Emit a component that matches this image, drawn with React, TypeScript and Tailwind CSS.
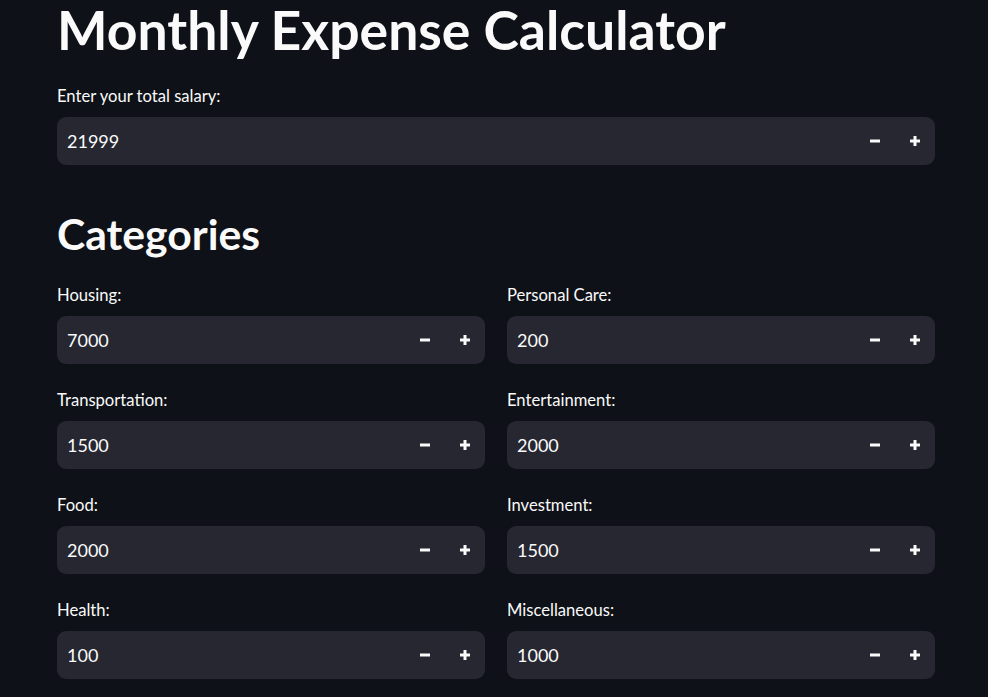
import React from 'react';

const font = { fontFamily: 'Lato, "Noto Sans", sans-serif' };

const MinusIcon = () => (
  <svg width="10" height="10" viewBox="0 0 10 10" fill="#fafafa">
    <rect x="0" y="3.5" width="10" height="3" />
  </svg>
);

const PlusIcon = () => (
  <svg width="10" height="10" viewBox="0 0 10 10" fill="#fafafa">
    <rect x="0" y="3.5" width="10" height="3" />
    <rect x="3.5" y="0" width="3" height="10" />
  </svg>
);

interface FieldProps {
  label: string;
  value: string;
}

const NumberField: React.FC<FieldProps> = ({ label, value }) => (
  <div className="flex flex-col">
    <label className="text-[16.6px] leading-[21px] text-[#fafafa] mb-[10px]">{label}</label>
    <div className="flex items-center h-[48px] rounded-[9px] bg-[#262730] pl-[10px]">
      <span className="flex-1 text-[18px] text-[#fafafa]">{value}</span>
      <button className="w-[40px] h-full flex items-center justify-center">
        <MinusIcon />
      </button>
      <button className="w-[40px] h-full flex items-center justify-center">
        <PlusIcon />
      </button>
    </div>
  </div>
);

const categories = [
  { label: 'Housing:', value: '7000' },
  { label: 'Personal Care:', value: '200' },
  { label: 'Transportation:', value: '1500' },
  { label: 'Entertainment:', value: '2000' },
  { label: 'Food:', value: '2000' },
  { label: 'Investment:', value: '1500' },
  { label: 'Health:', value: '100' },
  { label: 'Miscellaneous:', value: '1000' },
];

export default function App() {
  return (
    <div className="min-h-screen bg-[#0e1117] overflow-hidden" style={font}>
      <div className="w-[878px] ml-[57px] flex flex-col">
        <h1 className="text-[53.5px] leading-[58px] font-bold text-[#fafafa] mb-[28px]">
          Monthly Expense Calculator
        </h1>
        <NumberField label="Enter your total salary:" value="21999" />
        <h2 className="text-[42.7px] leading-[56px] font-bold text-[#fafafa] mt-[41px] mb-[23px]">
          Categories
        </h2>
        <div className="grid grid-cols-2 gap-x-[22px] gap-y-[26px]">
          {categories.map((c) => (
            <NumberField key={c.label} label={c.label} value={c.value} />
          ))}
        </div>
      </div>
    </div>
  );
}
